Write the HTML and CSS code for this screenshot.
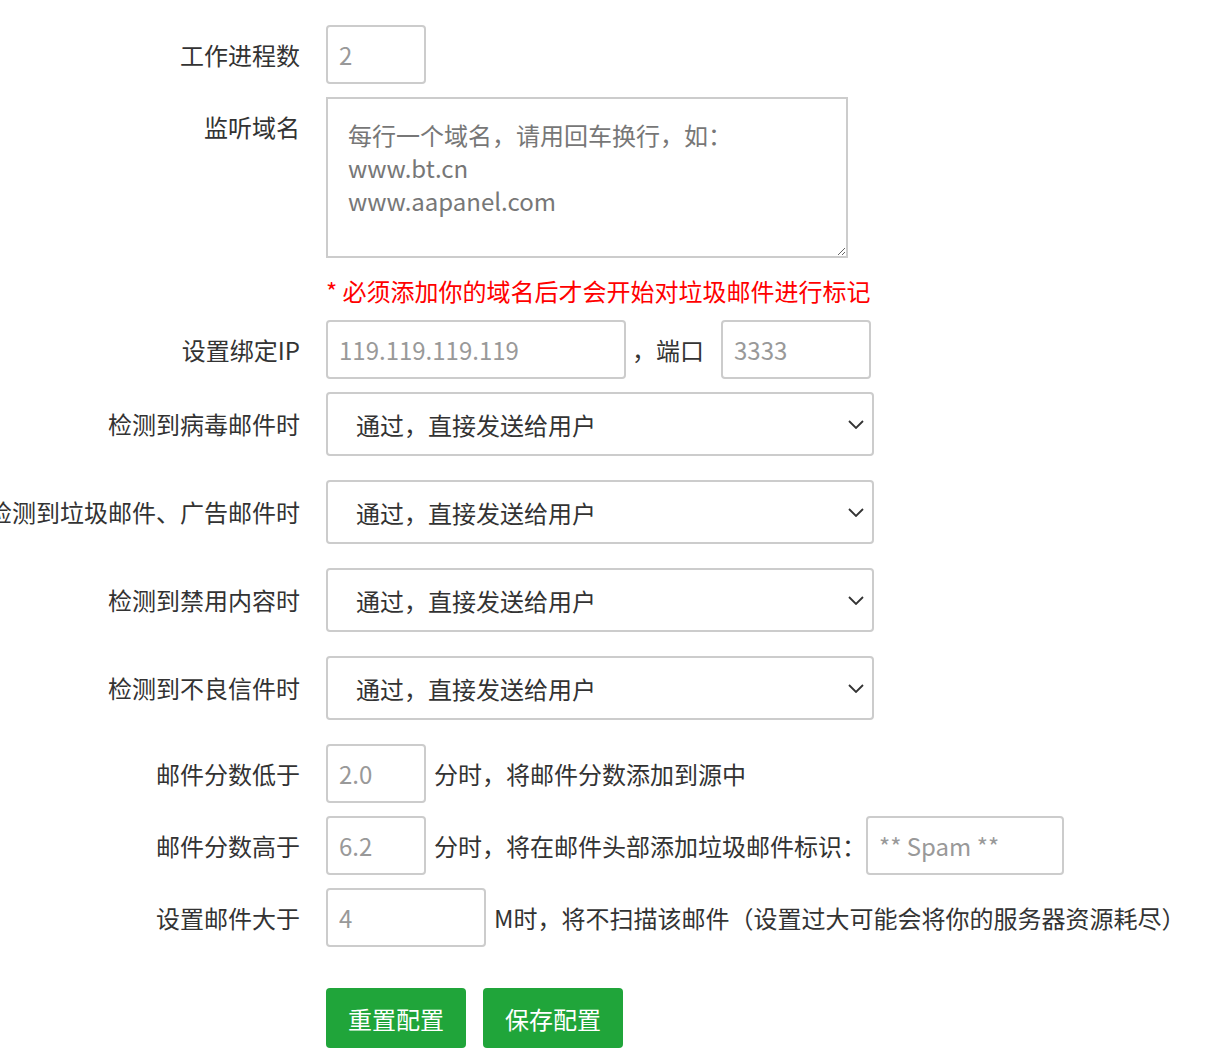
FILE: index.html
```html
<!DOCTYPE html>
<html lang="zh-CN">
<head>
	<meta charset="utf-8">
	<title>反垃圾邮件设置</title>
	<link rel="stylesheet" href="styles.css">
</head>
<body>
	<div class="form">
		<div class="row">
			<span class="name">工作进程数</span>
			<input class="inp w-s" type="text" value="2">
		</div>
		<div class="row">
			<span class="name">监听域名</span>
			<div class="ctrl">
				<textarea class="area" placeholder="每行一个域名，请用回车换行，如：&#10;www.bt.cn&#10;www.aapanel.com"></textarea>
				<p class="note">* 必须添加你的域名后才会开始对垃圾邮件进行标记</p>
			</div>
		</div>
		<div class="row">
			<span class="name">设置绑定IP</span>
			<input class="inp w-ip" type="text" value="119.119.119.119">
			<span class="unit port">，端口</span>
			<input class="inp w-port" type="text" value="3333">
		</div>
		<div class="row row-sel">
			<span class="name tall">检测到病毒邮件时</span>
			<div class="sel-wrap">
				<select class="sel">
					<option>通过，直接发送给用户</option>
					<option>拒绝</option>
				</select>
				<svg class="chev" width="16" height="9" viewBox="0 0 16 9"><path d="M1 1l7 7 7-7" fill="none" stroke="#333" stroke-width="1.8"/></svg>
			</div>
		</div>
		<div class="row row-sel">
			<span class="name tall">检测到垃圾邮件、广告邮件时</span>
			<div class="sel-wrap">
				<select class="sel">
					<option>通过，直接发送给用户</option>
					<option>拒绝</option>
				</select>
				<svg class="chev" width="16" height="9" viewBox="0 0 16 9"><path d="M1 1l7 7 7-7" fill="none" stroke="#333" stroke-width="1.8"/></svg>
			</div>
		</div>
		<div class="row row-sel">
			<span class="name tall">检测到禁用内容时</span>
			<div class="sel-wrap">
				<select class="sel">
					<option>通过，直接发送给用户</option>
					<option>拒绝</option>
				</select>
				<svg class="chev" width="16" height="9" viewBox="0 0 16 9"><path d="M1 1l7 7 7-7" fill="none" stroke="#333" stroke-width="1.8"/></svg>
			</div>
		</div>
		<div class="row row-sel">
			<span class="name tall">检测到不良信件时</span>
			<div class="sel-wrap">
				<select class="sel">
					<option>通过，直接发送给用户</option>
					<option>拒绝</option>
				</select>
				<svg class="chev" width="16" height="9" viewBox="0 0 16 9"><path d="M1 1l7 7 7-7" fill="none" stroke="#333" stroke-width="1.8"/></svg>
			</div>
		</div>
		<div class="row">
			<span class="name">邮件分数低于</span>
			<input class="inp w-s" type="text" value="2.0">
			<span class="unit">分时，将邮件分数添加到源中</span>
		</div>
		<div class="row">
			<span class="name">邮件分数高于</span>
			<input class="inp w-s" type="text" value="6.2">
			<span class="unit">分时，将在邮件头部添加垃圾邮件标识：</span>
			<input class="inp w-spam" type="text" value="** Spam **">
		</div>
		<div class="row">
			<span class="name">设置邮件大于</span>
			<input class="inp w-m" type="text" value="4">
			<span class="unit">M时，将不扫描该邮件（设置过大可能会将你的服务器资源耗尽）</span>
		</div>
		<div class="btns">
			<button class="btn">重置配置</button>
			<button class="btn">保存配置</button>
		</div>
	</div>
</body>
</html>
```

FILE: styles.css
```css
* {
	box-sizing: border-box;
}
body {
	margin: 0;
	background: #fff;
	color: #333;
	font-family: "Noto Sans CJK SC", "Open Sans", sans-serif;
	font-size: 24px;
}
.form {
	padding-top: 25px;
}
.row {
	display: flex;
	align-items: flex-start;
	margin-bottom: 13px;
}
.row-sel {
	margin-bottom: 24px;
}
.name {
	flex: none;
	width: 300px;
	margin-right: 26px;
	display: flex;
	justify-content: flex-end;
	white-space: nowrap;
	line-height: 59px;
}
.name.tall {
	line-height: 64px;
}
.inp {
	height: 59px;
	padding: 0 11px;
	border: 2px solid #ccc;
	border-radius: 4px;
	font: inherit;
	color: #999;
	background: #fff;
	outline: none;
}
.w-s {
	width: 100px;
}
.w-m {
	width: 160px;
}
.w-ip {
	width: 300px;
}
.w-port {
	width: 150px;
}
.w-spam {
	width: 198px;
}
.unit {
	line-height: 59px;
	margin-left: 8px;
	white-space: nowrap;
}
.unit.port {
	margin-left: 6px;
	margin-right: 17px;
}
.area {
	display: block;
	width: 522px;
	height: 161px;
	padding: 19px 20px;
	border: 2px solid #ccc;
	border-radius: 0;
	font: inherit;
	line-height: 33px;
	color: #333;
	outline: none;
}
.area::placeholder {
	color: #777;
}
.note {
	margin: 16px 0 0;
	color: #f00;
	font-size: 24px;
	line-height: 33px;
}
.sel-wrap {
	position: relative;
}
.sel {
	display: block;
	width: 548px;
	height: 64px;
	padding: 0 28px;
	border: 2px solid #ccc;
	border-radius: 4px;
	background: #fff;
	font: inherit;
	color: #333;
	appearance: none;
	-webkit-appearance: none;
	outline: none;
}
.chev {
	position: absolute;
	right: 10px;
	top: 28px;
}
.btns {
	display: flex;
	gap: 17px;
	padding-left: 326px;
	margin-top: 41px;
}
.btn {
	height: 60px;
	padding: 0 22px;
	border: none;
	border-radius: 4px;
	background: #20a53a;
	color: #fff;
	font: inherit;
	cursor: pointer;
}
```
